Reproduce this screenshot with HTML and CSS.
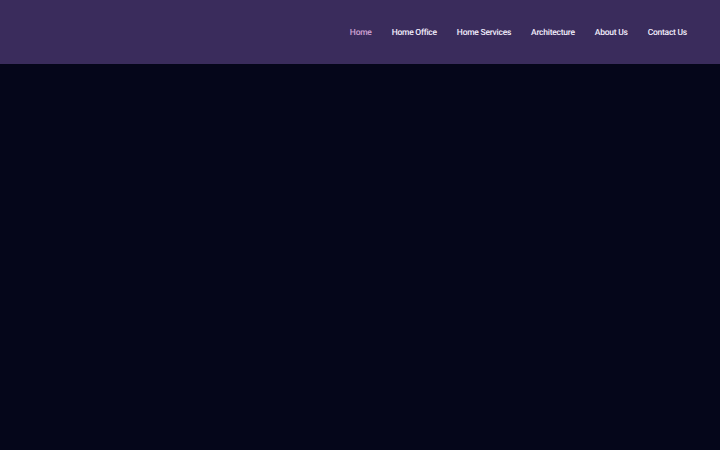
FILE: index.html
```html
<!DOCTYPE html>
<html>
<head>
<meta charset="utf-8">
<link rel="stylesheet" href="styles.css">
</head>
<body>
<header class="site-header">
  <nav class="main-nav">
    <a class="nav-link active" href="#">Home</a>
    <a class="nav-link" href="#">Home Office</a>
    <a class="nav-link" href="#">Home Services</a>
    <a class="nav-link" href="#">Architecture</a>
    <a class="nav-link" href="#">About Us</a>
    <a class="nav-link" href="#">Contact Us</a>
  </nav>
</header>
<main class="hero"></main>
</body>
</html>
```
FILE: styles.css
```css
html, body {
  margin: 0;
  padding: 0;
  height: 100%;
  background: #05061a;
  font-family: Roboto, "Liberation Sans", sans-serif;
}
body {
  display: flex;
  flex-direction: column;
}
.site-header {
  height: 64px;
  box-sizing: border-box;
  padding-top: 2px;
  background: #3a2c5c;
  display: flex;
  align-items: center;
  justify-content: flex-end;
  padding-right: 23px;
  flex-shrink: 0;
}
.main-nav {
  display: flex;
  align-items: center;
}
.nav-link {
  font-size: 8.5px;
  font-weight: 500;
  letter-spacing: -0.25px;
  color: #f3eefc;
  text-decoration: none;
  padding: 0 10px;
  line-height: 12px;
  text-rendering: geometricPrecision;
}
.nav-link.active {
  color: #cfa3d3;
}
.hero {
  flex: 1;
  background: #05061a;
}
```
